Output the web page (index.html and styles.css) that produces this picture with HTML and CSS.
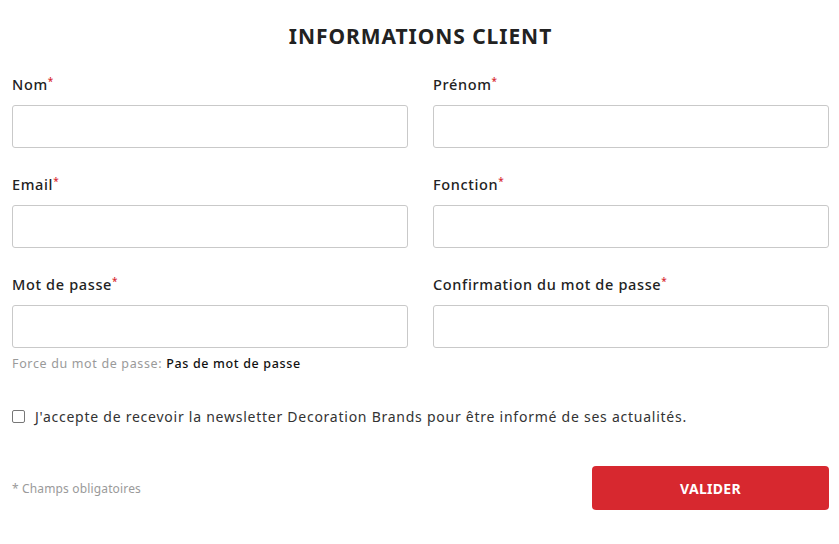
FILE: index.html
```html
<!DOCTYPE html>
<html lang="fr">
<head>
<meta charset="utf-8">
<title>Informations client</title>
<link rel="stylesheet" href="styles.css">
</head>
<body>
<form class="form">
  <h1 class="title">INFORMATIONS CLIENT</h1>
  <div class="grid">
    <div class="field">
      <label class="label">Nom<span class="req">*</span></label>
      <input class="input" type="text">
    </div>
    <div class="field">
      <label class="label">Prénom<span class="req">*</span></label>
      <input class="input" type="text">
    </div>
    <div class="field">
      <label class="label">Email<span class="req">*</span></label>
      <input class="input" type="text">
    </div>
    <div class="field">
      <label class="label">Fonction<span class="req">*</span></label>
      <input class="input" type="text">
    </div>
    <div class="field">
      <label class="label">Mot de passe<span class="req">*</span></label>
      <input class="input" type="password">
      <div class="strength">Force du mot de passe: <strong>Pas de mot de passe</strong></div>
    </div>
    <div class="field">
      <label class="label">Confirmation du mot de passe<span class="req">*</span></label>
      <input class="input" type="password">
    </div>
  </div>
  <label class="newsletter"><span class="box"></span>J'accepte de recevoir la newsletter Decoration Brands pour être informé de ses actualités.</label>
  <div class="footer">
    <span class="note">* Champs obligatoires</span>
    <button class="submit" type="button">VALIDER</button>
  </div>
</form>
</body>
</html>
```
FILE: styles.css
```css
* { box-sizing: border-box; }
html, body { margin: 0; padding: 0; background: #fff; }
body {
  font-family: "Noto Sans", "Open Sans", sans-serif;
  color: #222;
}
.form {
  padding: 19px 10px 0 12px;
}
.title {
  margin: 0 0 22px;
  text-align: center;
  font-size: 21px;
  font-weight: 700;
  letter-spacing: 0.95px;
  color: #222;
  line-height: 34px;
}
.grid {
  display: grid;
  grid-template-columns: 396px 396px;
  column-gap: 25px;
  row-gap: 27px;
}
.field { display: flex; flex-direction: column; position: relative; }
.label {
  font-size: 14.5px;
  font-weight: 500;
  color: #222;
  line-height: 18px;
  margin-bottom: 12px;
  letter-spacing: 0.65px;
}
.req {
  color: #d7282f;
  font-size: 10px;
  vertical-align: top;
  margin-left: 0;
  position: relative;
  top: -3px;
}
.input {
  height: 43px;
  border: 1px solid #c9c9c9;
  border-radius: 3px;
  background: #fff;
  font: inherit;
}
.strength {
  position: absolute;
  left: 0;
  bottom: -24px;
  font-size: 12.5px;
  color: #9a9a9a;
  letter-spacing: 0.65px;
  white-space: nowrap;
}
.strength strong { color: #111; font-weight: 500; }
.newsletter {
  display: flex;
  align-items: center;
  margin-top: 59px;
  font-size: 14px;
  color: #333;
  letter-spacing: 0.75px;
}
.box {
  width: 13px;
  height: 13px;
  border: 1px solid #777;
  border-radius: 2px;
  margin-right: 10px;
  flex: none;
}
.footer {
  display: flex;
  justify-content: space-between;
  align-items: center;
  margin-top: 40px;
}
.note { font-size: 12px; color: #9a9a9a; letter-spacing: 0.15px; }
.submit {
  width: 237px;
  height: 44px;
  background: #d7282f;
  border: none;
  border-radius: 4px;
  color: #fff;
  font: inherit;
  font-size: 14px;
  font-weight: 700;
  letter-spacing: 0.3px;
}
```
